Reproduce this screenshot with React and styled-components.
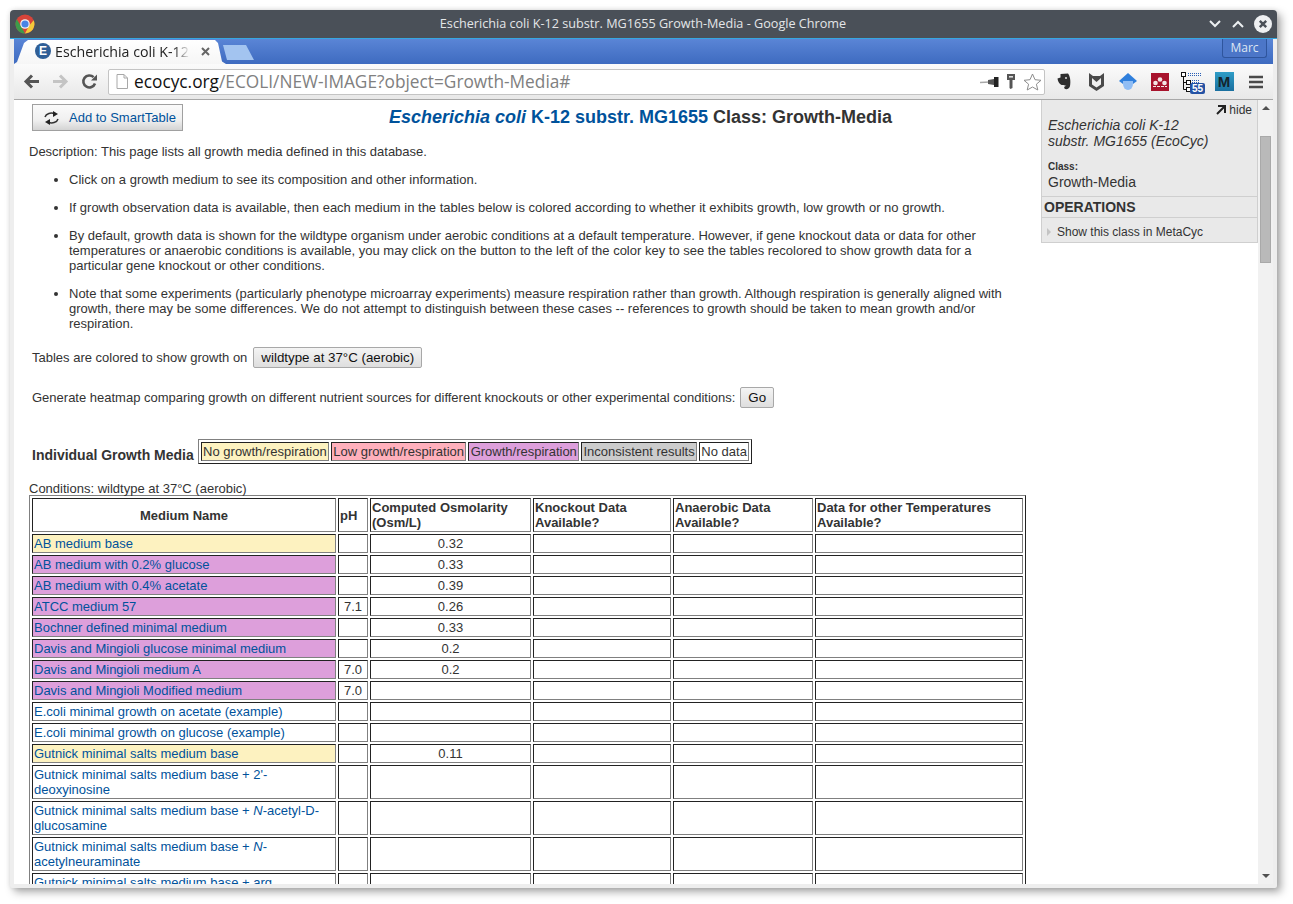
import React from 'react';
import styled, { createGlobalStyle } from 'styled-components';

const GlobalStyle = createGlobalStyle`
  html, body { margin: 0; padding: 0; background: #fff; overflow: hidden; }
  body { font-family: "Liberation Sans", Arial, sans-serif; font-size: 13px; color: #333; }
`;

const Desktop = styled.div`
  width: 1293px;
  height: 904px;
  padding: 10px 0 0 10px;
  box-sizing: border-box;
`;

const Window = styled.div`
  width: 1267px;
  height: 878px;
  background: #eeeeee;
  border-radius: 4px 4px 2px 2px;
  box-shadow: 4px 4px 9px rgba(0, 0, 0, 0.34), 0 0 5px rgba(0, 0, 0, 0.1);
  display: flex;
  flex-direction: column;
  overflow: hidden;
`;

const TitleBar = styled.div`
  height: 28px;
  flex: none;
  background: #4a5058;
  display: flex;
  align-items: center;
  padding: 0 5px;
  color: #e4e6e8;
  font: 12.65px "Open Sans", "Noto Sans", sans-serif;
`;

const WindowTitle = styled.div`
  flex: 1;
  text-align: center;
  padding: 0 0 2px 43px;
  white-space: nowrap;
`;

const WindowButtons = styled.div`
  display: flex;
  align-items: center;
  gap: 9px;
`;

const Frame = styled.div`
  flex: 1;
  min-height: 0;
  padding: 0 4px 4px;
  display: flex;
  flex-direction: column;
  position: relative;
  &::before {
    content: '';
    height: 1px;
    flex: none;
    margin: 0 -4px;
    background: #35a7e0;
  }
`;

const TabStrip = styled.div`
  height: 25px;
  flex: none;
  background: linear-gradient(#5a85d6, #3e6bc0);
  display: flex;
  align-items: flex-end;
  position: relative;
`;

const Tab = styled.div`
  width: 212px;
  height: 24px;
  flex: none;
  background: linear-gradient(#ffffff, #f6f6f6);
  clip-path: polygon(0 100%, 3px 92%, 10px 12%, 14px 0, 201px 0, 204px 12%, 208px 90%, 212px 100%);
  display: flex;
  align-items: center;
  padding: 0 0 2px 21px;
  box-sizing: border-box;
  font: 14.2px "Open Sans", "Noto Sans", sans-serif;
  color: #222;
`;

const FavIcon = styled.span`
  width: 16px;
  height: 16px;
  flex: none;
  border-radius: 50%;
  background: #2f5f97;
  color: #fff;
  font: bold 12px/16px "Liberation Sans", sans-serif;
  text-align: center;
  margin-right: 4px;
`;

const TabTitle = styled.span`
  width: 135px;
  overflow: hidden;
  white-space: nowrap;
  -webkit-mask-image: linear-gradient(90deg, #000 88%, transparent 100%);
  mask-image: linear-gradient(90deg, #000 88%, transparent 100%);
`;

const TabClose = styled.svg`
  margin-left: 11px;
  flex: none;
`;

const NewTab = styled.div`
  width: 31px;
  height: 15px;
  flex: none;
  margin: 0 0 4px -3px;
  background: #a3c4f0;
  clip-path: polygon(0 0, 23px 0, 100% 100%, 4px 100%);
`;

const ProfileButton = styled.div`
  position: absolute;
  right: 6px;
  top: 0;
  width: 45px;
  height: 19px;
  box-sizing: border-box;
  border: 1px solid #2f559d;
  border-top: none;
  border-radius: 0 0 3px 3px;
  background: #4c76c8;
  color: #dfe6f2;
  font: 12px/18px "Open Sans", "Noto Sans", sans-serif;
  text-align: center;
`;

const Toolbar = styled.div`
  height: 36px;
  flex: none;
  background: linear-gradient(#fbfbfb, #e8e8e8);
  border-bottom: 1px solid #a8a8a8;
  box-sizing: border-box;
  display: flex;
  align-items: center;
  padding-left: 9px;
`;

const NavButton = styled.svg`
  flex: none;
  margin-right: ${(p) => p.$gap}px;
`;

const Omnibox = styled.div`
  width: 937px;
  height: 26px;
  flex: none;
  box-sizing: border-box;
  background: #fff;
  border: 1px solid #c4c4c4;
  border-radius: 2px;
  display: flex;
  align-items: center;
  padding-left: 7px;
  margin-left: 10px;
  font: 17.3px "Open Sans", "Noto Sans", sans-serif;
  color: #808080;
`;

const Host = styled.span`
  color: #111;
`;

const UrlText = styled.div`
  flex: 1;
  margin-left: 6px;
  white-space: nowrap;
`;

const OmniIcons = styled.div`
  display: flex;
  align-items: center;
  gap: 7px;
  padding-right: 2px;
`;

const Extensions = styled.div`
  display: flex;
  align-items: center;
  flex: none;
  margin-left: 3px;
`;

const ExtSlot = styled.div`
  width: 32px;
  height: 24px;
  display: flex;
  justify-content: center;
  align-items: center;
  position: relative;
`;

const ExtBadge = styled.span`
  position: absolute;
  left: 14px;
  top: 13px;
  width: 15px;
  height: 11px;
  border-radius: 2px;
  background: #2452a4;
  color: #fff;
  font: bold 10px/11px "Liberation Sans", sans-serif;
  text-align: center;
`;

const MetaIcon = styled.span`
  width: 19px;
  height: 19px;
  background: linear-gradient(#2f9dc7, #1a6f9f);
  color: #14242e;
  font: bold 15px/19px "Liberation Sans", sans-serif;
  text-align: center;
`;

const Viewport = styled.div`
  flex: 1;
  min-height: 0;
  background: #fff;
  display: flex;
  overflow: hidden;
`;

const Page = styled.div`
  width: 1244px;
  flex: none;
  display: flex;
  overflow: hidden;
`;

const Main = styled.div`
  width: 1027px;
  flex: none;
  box-sizing: border-box;
  padding: 4px 0 0 15px;
`;

const Header = styled.div`
  display: flex;
  align-items: center;
  height: 27px;
  padding-left: 3px;
`;

const SmartTableButton = styled.div`
  width: 151px;
  height: 27px;
  box-sizing: border-box;
  flex: none;
  display: flex;
  align-items: center;
  padding-left: 10px;
  gap: 9px;
  border: 1px solid #a0a0a0;
  background: linear-gradient(#fafafa, #f0f0f0 60%, #d4d4d4);
  color: #00529b;
`;

const PageTitle = styled.h1`
  flex: 1;
  margin: 0;
  padding-left: 57px;
  text-align: center;
  font-size: 18px;
  line-height: 21px;
  font-weight: bold;
  color: #333;
  white-space: nowrap;
`;

const OrgLink = styled.span`
  color: #00529b;
`;

const Description = styled.p`
  margin: 13px 0 0;
  line-height: 15px;
`;

const Bullets = styled.ul`
  margin: 13px 0 0;
  padding: 0 14px 0 40px;
`;

const Bullet = styled.li`
  line-height: 15px;
  margin-bottom: 13px;
  &:last-child { margin-bottom: 0; }
`;

const ControlRow = styled.div`
  display: flex;
  align-items: center;
  height: 21px;
  padding-left: 3px;
  margin-top: ${(p) => p.$top}px;
  gap: ${(p) => p.$gap}px;
`;

const GrayButton = styled.div`
  height: 21px;
  box-sizing: border-box;
  padding: 0 7px;
  border: 1px solid #a8a8a8;
  border-radius: 2px;
  background: linear-gradient(#f4f4f4, #dedede);
  color: #111;
  font-size: 13.33px;
  line-height: 19px;
  white-space: nowrap;
`;

const LegendRow = styled.div`
  display: flex;
  align-items: flex-end;
  margin-top: 31px;
  padding-left: 3px;
  gap: 4px;
`;

const SectionHeading = styled.div`
  font-size: 14px;
  font-weight: bold;
  line-height: 16px;
  margin-bottom: 1px;
`;

const LegendTable = styled.div`
  display: flex;
  gap: 2px;
  padding: 2px;
  border: 1px solid;
  border-color: #808080 #222 #222 #808080;
  height: 25px;
  box-sizing: border-box;
`;

const LegendCell = styled.div`
  box-sizing: border-box;
  height: 19px;
  padding: 0 1.3px;
  border: 1px solid;
  border-color: #222 #808080 #808080 #222;
  line-height: 17px;
  background: ${(p) => p.$bg};
  white-space: nowrap;
`;

const Conditions = styled.div`
  margin-top: 18px;
  line-height: 13px;
`;

const DataTable = styled.table`
  table-layout: fixed;
  width: 997px;
  border-collapse: separate;
  border-spacing: 2px;
  border: 1px solid;
  border-color: #808080 #222 #222 #808080;
`;

const HeadCell = styled.th`
  box-sizing: border-box;
  padding: 1px;
  border: 1px solid;
  border-color: #222 #808080 #808080 #222;
  font-size: 13px;
  line-height: 15px;
  text-align: ${(p) => (p.$center ? 'center' : 'left')};
`;

const Cell = styled.td`
  box-sizing: border-box;
  padding: 1px;
  border: 1px solid;
  border-color: #222 #808080 #808080 #222;
  line-height: 15px;
  height: 19px;
  background: ${(p) => p.$bg || 'transparent'};
  text-align: ${(p) => (p.$center ? 'center' : 'left')};
`;

const MediumLink = styled.span`
  color: #00529b;
`;

const Sidebar = styled.aside`
  width: 217px;
  height: 143px;
  flex: none;
  box-sizing: border-box;
  background: #e9e9e9;
  border: 1px solid #cfcfcf;
  border-top: none;
  display: flex;
  flex-direction: column;
  color: #333;
`;

const HideRow = styled.div`
  height: 17px;
  display: flex;
  justify-content: flex-end;
  align-items: center;
  gap: 3px;
  padding: 3px 5px 0 0;
  font-size: 12px;
  box-sizing: border-box;
`;

const OrgName = styled.div`
  font-style: italic;
  font-size: 14px;
  line-height: 16px;
  padding: 0 6px;
`;

const ClassLabel = styled.div`
  font-size: 10px;
  font-weight: bold;
  line-height: 12px;
  padding: 0 6px;
  margin-top: 12px;
`;

const ClassName = styled.div`
  font-size: 14px;
  line-height: 16px;
  padding: 0 6px 6px;
  margin-top: 1px;
  border-bottom: 1px solid #cfcfcf;
`;

const OpsHeading = styled.div`
  height: 21px;
  box-sizing: border-box;
  font-size: 14px;
  font-weight: bold;
  line-height: 20px;
  padding-left: 2px;
  border-bottom: 1px solid #cfcfcf;
`;

const OpsItem = styled.div`
  flex: 1;
  display: flex;
  align-items: center;
  padding: 4px 0 0 5px;
  gap: 6px;
  font-size: 12px;
`;

const Arrow = styled.span`
  width: 0;
  height: 0;
  border-left: 4px solid #c4c4c4;
  border-top: 4px solid transparent;
  border-bottom: 4px solid transparent;
`;

const Scrollbar = styled.div`
  width: 15px;
  flex: none;
  background: #f1f1f1;
  display: flex;
  flex-direction: column;
  align-items: center;
  justify-content: space-between;
  position: relative;
  padding: 6px 0;
  box-sizing: border-box;
`;

const ScrollArrow = styled.span`
  width: 0;
  height: 0;
  border-left: 4px solid transparent;
  border-right: 4px solid transparent;
  ${(p) => (p.$up ? 'border-bottom: 4px solid #505050;' : 'border-top: 4px solid #505050;')}
`;

const ScrollThumb = styled.div`
  position: absolute;
  left: 2px;
  top: 36px;
  width: 11px;
  height: 127px;
  box-sizing: border-box;
  background: #b9b9b9;
  border: 1px solid #a9a9a9;
`;

const YELLOW = '#fdf2c0';
const PINK = '#ffb0bc';
const PURPLE = '#dd9fdb';
const GRAY = '#cccccc';

const legend = [
  ['No growth/respiration', YELLOW],
  ['Low growth/respiration', PINK],
  ['Growth/respiration', PURPLE],
  ['Inconsistent results', GRAY],
  ['No data', '#fff'],
];

const columns = [304, 30, 161, 138, 140, 208];

const media = [
  ['AB medium base', YELLOW, '', '0.32'],
  ['AB medium with 0.2% glucose', PURPLE, '', '0.33'],
  ['AB medium with 0.4% acetate', PURPLE, '', '0.39'],
  ['ATCC medium 57', PURPLE, '7.1', '0.26'],
  ['Bochner defined minimal medium', PURPLE, '', '0.33'],
  ['Davis and Mingioli glucose minimal medium', PURPLE, '', '0.2'],
  ['Davis and Mingioli medium A', PURPLE, '7.0', '0.2'],
  ['Davis and Mingioli Modified medium', PURPLE, '7.0', ''],
  ['E.coli minimal growth on acetate (example)', null, '', ''],
  ['E.coli minimal growth on glucose (example)', null, '', ''],
  ['Gutnick minimal salts medium base', YELLOW, '', '0.11'],
  ["Gutnick minimal salts medium base + 2'-deoxyinosine", null, '', ''],
  [<>Gutnick minimal salts medium base + <i>N</i>-acetyl-D-glucosamine</>, null, '', ''],
  [<>Gutnick minimal salts medium base + <i>N</i>-acetylneuraminate</>, null, '', ''],
  ['Gutnick minimal salts medium base + arg', null, '', ''],
];

const ChromeLogo = () => (
  <svg width="20" height="20" viewBox="0 0 20 20">
    <circle cx="10" cy="10" r="9.5" fill="#d8443a" />
    <path d="M1.8 5.2 L6.2 12.6 L10 19.500 A9.500 9.500 0 0 1 1.800 5.200Z" fill="#3d9c4a" />
    <path d="M10 19.500 L14 11.800 L18.700 6.300 A9.500 9.500 0 0 1 10 19.500Z" fill="#f5c93a" />
    <circle cx="10" cy="10" r="4.800" fill="#f4f4f4" />
    <circle cx="10" cy="10" r="3.600" fill="#4a84e6" />
  </svg>
);

const Chevron = ({ up }) => (
  <svg width="14" height="10" viewBox="0 0 14 10">
    <path d={up ? 'M2 8 L7 3 L12 8' : 'M2 2 L7 7 L12 2'} fill="none" stroke="#eceff1" strokeWidth="2" />
  </svg>
);

const CloseCircle = () => (
  <svg width="18" height="18" viewBox="0 0 18 18">
    <circle cx="9" cy="9" r="9" fill="#eef0f2" />
    <path d="M5.800 5.800 L12.200 12.200 M12.200 5.800 L5.800 12.200" stroke="#4a5058" strokeWidth="2.400" />
  </svg>
);

const SmartIcon = () => (
  <svg width="17" height="14" viewBox="0 0 17 14">
    <path d="M2 6 C3 2.500 8 1 12 3" fill="none" stroke="#333" strokeWidth="1.500" />
    <path d="M10 0 L15 3 L10 6Z" fill="#222" />
    <path d="M15 8 C14 11.500 9 13 5 11" fill="none" stroke="#333" strokeWidth="1.500" />
    <path d="M7 8 L2 11 L7 14Z" fill="#222" />
  </svg>
);

const App = () => (
  <Desktop>
    <GlobalStyle />
    <Window>
      <TitleBar>
        <ChromeLogo />
        <WindowTitle>Escherichia coli K-12 substr. MG1655 Growth-Media - Google Chrome</WindowTitle>
        <WindowButtons>
          <Chevron />
          <Chevron up />
          <CloseCircle />
        </WindowButtons>
      </TitleBar>
      <Frame>
        <TabStrip>
          <Tab>
            <FavIcon>E</FavIcon>
            <TabTitle>Escherichia coli K-12 substr.</TabTitle>
            <TabClose width="9" height="9" viewBox="0 0 9 9">
              <path d="M1 1 L8 8 M8 1 L1 8" stroke="#666" strokeWidth="2" />
            </TabClose>
          </Tab>
          <NewTab />
          <ProfileButton>Marc</ProfileButton>
        </TabStrip>
        <Toolbar>
          <NavButton $gap={12} width="17" height="15" viewBox="0 0 17 15">
            <path d="M16 7.500 H4 M9 1.500 L3 7.500 L9 13.500" fill="none" stroke="#555" strokeWidth="3" />
          </NavButton>
          <NavButton $gap={12} width="17" height="15" viewBox="0 0 17 15">
            <path d="M1 7.500 H13 M8 1.500 L14 7.500 L8 13.500" fill="none" stroke="#c4c4c4" strokeWidth="3" />
          </NavButton>
          <NavButton $gap={0} width="17" height="17" viewBox="0 0 17 17">
            <path d="M14 10.500 A6 6 0 1 1 12.600 4.200" fill="none" stroke="#555" strokeWidth="2.600" />
            <path d="M10 7.500 H16 V1.500Z" fill="#555" />
          </NavButton>
          <Omnibox>
            <svg width="12" height="15" viewBox="0 0 12 15">
              <path d="M1 .5 H8 L11.500 4 V14.500 H1Z M8 .5 V4 H11.500" fill="#fff" stroke="#a8a8a8" />
            </svg>
            <UrlText>
              <Host>ecocyc.org</Host>/ECOLI/NEW-IMAGE?object=Growth-Media#
            </UrlText>
            <OmniIcons>
              <svg width="19" height="14" viewBox="0 0 19 14">
                <path d="M0 7.500 L10 7" stroke="#a8a8a8" strokeWidth="1.400" />
                <path d="M8 5 L14 4 V10 L8 9Z" fill="#555" />
                <path d="M14 2 H18.500 V12 H14Z" fill="#222" />
              </svg>
              <svg width="10" height="15" viewBox="0 0 10 15">
                <path d="M1 0 H9 V6 H6.500 V14 L4.500 15 L3.500 14 V6 H1Z" fill="#555" />
                <rect x="3" y="2" width="4" height="1.600" fill="#ddd" />
              </svg>
              <svg width="19" height="18" viewBox="0 0 19 18">
                <path d="M9.500 1 L12 6.700 L18 7.300 L13.400 11.200 L14.800 17 L9.500 14 L4.200 17 L5.600 11.200 L1 7.300 L7 6.700Z" fill="#fff" stroke="#8c8c8c" />
              </svg>
            </OmniIcons>
          </Omnibox>
          <Extensions>
            <ExtSlot>
              <svg width="14" height="17" viewBox="0 0 14 17">
                <path d="M3.500 1 L11 .5 C13 3 14 8 13 13 C12.600 16 9 17 7.500 15.500 C6.500 14 8 12.500 9.500 13 L6.500 12 C3 12.500 1 9 .5 5.500 L3.500 4.500Z" fill="#2e2e2e" />
                <circle cx="9" cy="5" r="1" fill="#ddd" />
              </svg>
            </ExtSlot>
            <ExtSlot>
              <svg width="15" height="18" viewBox="0 0 15 18">
                <path d="M0 0 L4 3 H11 L15 0 V13 L7.500 18 L0 13Z" fill="#4a4a4a" />
                <path d="M3 5 L7.500 9 L12 5 V11.500 L7.500 14.500 L3 11.500Z" fill="#f0f0f0" />
              </svg>
            </ExtSlot>
            <ExtSlot>
              <svg width="18" height="17" viewBox="0 0 18 17">
                <path d="M9 0 L18 8 L9 8 L0 8Z" fill="#2f7fdc" />
                <path d="M0 8 L4 11 H14 L18 8Z" fill="#2f7fdc" />
                <path d="M4 8 H14 V11 A5 6 0 0 1 4 11Z" fill="#90bdf4" />
              </svg>
            </ExtSlot>
            <ExtSlot>
              <svg width="18" height="18" viewBox="0 0 18 18">
                <rect width="18" height="18" fill="#a8132c" />
                <circle cx="4.500" cy="10" r="2.300" fill="#f4e4e4" />
                <circle cx="9" cy="6.500" r="2.300" fill="#f4e4e4" />
                <circle cx="13.500" cy="10" r="2.300" fill="#f4e4e4" />
                <path d="M2 13.500 H16" stroke="#f4e4e4" strokeWidth="1" strokeDasharray="3 1" />
              </svg>
            </ExtSlot>
            <ExtSlot>
              <svg width="24" height="20" viewBox="0 0 24 20">
                <path d="M3.500 4 V17.500 H6 M3.500 10.500 H6" stroke="#111" fill="none" />
                <rect x="1.500" y=".5" width="4" height="4" fill="#fff" stroke="#111" />
                <rect x="6.500" y="8.500" width="4" height="4" fill="#fff" stroke="#111" />
                <rect x="6.500" y="15.500" width="4" height="4" fill="#fff" stroke="#111" />
                <path d="M8 1.500 H21 M8 3.500 H21 M12 8.500 H20 M12 10.500 H20" stroke="#2b5fb5" strokeDasharray="1 1" />
              </svg>
              <ExtBadge>55</ExtBadge>
            </ExtSlot>
            <ExtSlot>
              <MetaIcon>M</MetaIcon>
            </ExtSlot>
            <ExtSlot>
              <svg width="14" height="14" viewBox="0 0 14 14">
                <path d="M0 2 H14 M0 7 H14 M0 12 H14" stroke="#4a4a4a" strokeWidth="2.400" />
              </svg>
            </ExtSlot>
          </Extensions>
        </Toolbar>
        <Viewport>
          <Page>
            <Main>
              <Header>
                <SmartTableButton>
                  <SmartIcon />
                  Add to SmartTable
                </SmartTableButton>
                <PageTitle>
                  <OrgLink><i>Escherichia coli</i> K-12 substr. MG1655</OrgLink> Class: Growth-Media
                </PageTitle>
              </Header>
              <Description>Description: This page lists all growth media defined in this database.</Description>
              <Bullets>
                <Bullet>Click on a growth medium to see its composition and other information.</Bullet>
                <Bullet>If growth observation data is available, then each medium in the tables below is colored according to whether it exhibits growth, low growth or no growth.</Bullet>
                <Bullet>By default, growth data is shown for the wildtype organism under aerobic conditions at a default temperature. However, if gene knockout data or data for other temperatures or anaerobic conditions is available, you may click on the button to the left of the color key to see the tables recolored to show growth data for a particular gene knockout or other conditions.</Bullet>
                <Bullet>Note that some experiments (particularly phenotype microarray experiments) measure respiration rather than growth. Although respiration is generally aligned with growth, there may be some differences. We do not attempt to distinguish between these cases -- references to growth should be taken to mean growth and/or respiration.</Bullet>
              </Bullets>
              <ControlRow $top={16} $gap={6}>
                Tables are colored to show growth on
                <GrayButton>wildtype at 37°C (aerobic)</GrayButton>
              </ControlRow>
              <ControlRow $top={19} $gap={5}>
                Generate heatmap comparing growth on different nutrient sources for different knockouts or other experimental conditions:
                <GrayButton>Go</GrayButton>
              </ControlRow>
              <LegendRow>
                <SectionHeading>Individual Growth Media</SectionHeading>
                <LegendTable>
                  {legend.map(([label, bg]) => (
                    <LegendCell key={label} $bg={bg}>{label}</LegendCell>
                  ))}
                </LegendTable>
              </LegendRow>
              <Conditions>Conditions: wildtype at 37°C (aerobic)</Conditions>
              <DataTable>
                <colgroup>
                  {columns.map((w, i) => <col key={i} style={{ width: w }} />)}
                </colgroup>
                <thead>
                  <tr>
                    <HeadCell $center>Medium Name</HeadCell>
                    <HeadCell>pH</HeadCell>
                    <HeadCell>Computed Osmolarity (Osm/L)</HeadCell>
                    <HeadCell>Knockout Data Available?</HeadCell>
                    <HeadCell>Anaerobic Data Available?</HeadCell>
                    <HeadCell>Data for other Temperatures Available?</HeadCell>
                  </tr>
                </thead>
                <tbody>
                  {media.map(([name, bg, ph, osm], i) => (
                    <tr key={i}>
                      <Cell $bg={bg}><MediumLink>{name}</MediumLink></Cell>
                      <Cell $center>{ph}</Cell>
                      <Cell $center>{osm}</Cell>
                      <Cell />
                      <Cell />
                      <Cell />
                    </tr>
                  ))}
                </tbody>
              </DataTable>
            </Main>
            <Sidebar>
              <HideRow>
                <svg width="10" height="10" viewBox="0 0 10 10">
                  <path d="M1 9 L8.500 1.500 M2 1 H9 V8" fill="none" stroke="#222" strokeWidth="2" />
                </svg>
                hide
              </HideRow>
              <OrgName>Escherichia coli K-12<br />substr. MG1655 (EcoCyc)</OrgName>
              <ClassLabel>Class:</ClassLabel>
              <ClassName>Growth-Media</ClassName>
              <OpsHeading>OPERATIONS</OpsHeading>
              <OpsItem><Arrow />Show this class in MetaCyc</OpsItem>
            </Sidebar>
          </Page>
          <Scrollbar>
            <ScrollArrow $up />
            <ScrollThumb />
            <ScrollArrow />
          </Scrollbar>
        </Viewport>
      </Frame>
    </Window>
  </Desktop>
);

export default App;
